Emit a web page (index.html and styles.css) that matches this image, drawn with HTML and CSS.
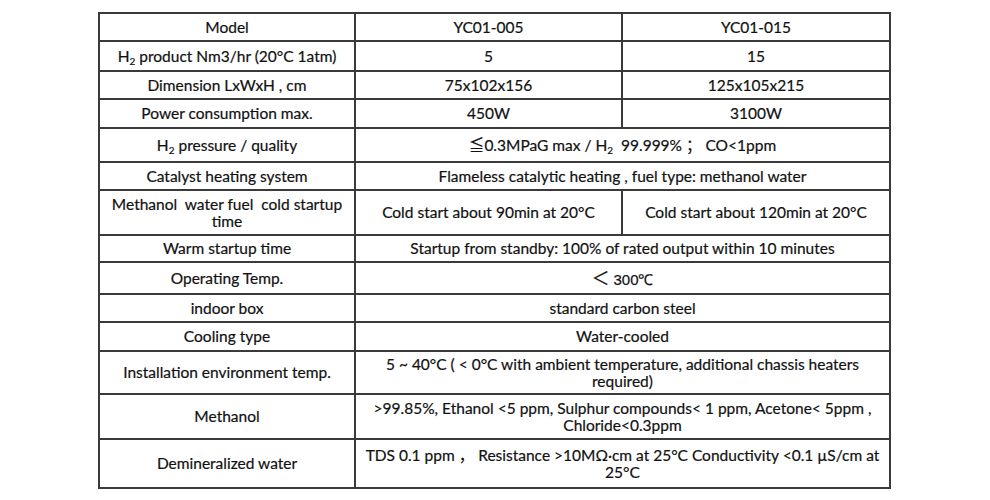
FILE: index.html
```html
<!DOCTYPE html>
<html>
<head>
<meta charset="utf-8">
<link rel="stylesheet" href="styles.css">
</head>
<body>
<table class="spec">
  <colgroup><col class="c1"><col class="c2"><col class="c3"></colgroup>
  <tr class="h28"><td>Model</td><td>YC01-005</td><td>YC01-015</td></tr>
  <tr class="h30"><td>H<sub>2</sub> product Nm3/hr (20°C 1atm)</td><td>5</td><td>15</td></tr>
  <tr class="h28"><td>Dimension LxWxH , cm</td><td>75x102x156</td><td>125x105x215</td></tr>
  <tr class="h29"><td>Power consumption max.</td><td>450W</td><td>3100W</td></tr>
  <tr class="h34"><td>H<sub>2</sub> pressure / quality</td><td colspan="2"><span class="cjk">≦</span>0.3MPaG max / H<sub>2</sub>&nbsp; 99.999% <span class="cjk">；</span> CO&lt;1ppm</td></tr>
  <tr class="h28"><td>Catalyst heating system</td><td colspan="2">Flameless catalytic heating , fuel type: methanol water</td></tr>
  <tr class="h45"><td class="tight">Methanol&nbsp; water fuel&nbsp; cold startup<br>time</td><td>Cold start about 90min at 20°C</td><td>Cold start about 120min at 20°C</td></tr>
  <tr class="h27"><td>Warm startup time</td><td colspan="2">Startup from standby: 100% of rated output within 10 minutes</td></tr>
  <tr class="h32"><td>Operating Temp.</td><td colspan="2"><span class="cjk lt">＜</span> <span class="cjk num">300℃</span></td></tr>
  <tr class="h28"><td>indoor box</td><td colspan="2">standard carbon steel</td></tr>
  <tr class="h29"><td>Cooling type</td><td colspan="2">Water-cooled</td></tr>
  <tr class="h43"><td>Installation environment temp.</td><td colspan="2" class="tight">5 ~ 40°C ( &lt; 0°C with ambient temperature, additional chassis heaters<br>required)</td></tr>
  <tr class="h45"><td>Methanol</td><td colspan="2" class="tight">&gt;99.85%, Ethanol &lt;5 ppm, Sulphur compounds&lt; 1 ppm, Acetone&lt; 5ppm ,<br>Chloride&lt;0.3ppm</td></tr>
  <tr class="h49"><td>Demineralized water</td><td colspan="2" class="tight">TDS 0.1 ppm <span class="cjk">，</span> Resistance &gt;10MΩ·cm at 25°C Conductivity &lt;0.1 µS/cm at<br>25°C</td></tr>
</table>
</body>
</html>
```
FILE: styles.css
```css
html, body {
  margin: 0;
  padding: 0;
  background: #ffffff;
}
body {
  font-family: "Lato", "Liberation Sans", sans-serif;
  font-size: 15.5px;
  color: #111111;
}
.spec {
  border-collapse: collapse;
  margin: 12px 0 0 98px;
  width: 792px;
  table-layout: fixed;
}
.c1 { width: 256px; }
.c2 { width: 267px; }
.c3 { width: 268px; }
.spec td {
  border: 2px solid #3a3a3a;
  text-align: center;
  vertical-align: middle;
  padding: 0 6px;
  line-height: 17px;
  white-space: nowrap;
  -webkit-text-stroke: 0.2px #111;
}
.spec td.tight { padding: 0 2px; }
sub {
  font-size: 10px;
  line-height: 0;
  vertical-align: -3px;
}
.cjk {
  font-family: "Noto Sans CJK SC", sans-serif;
}
.lt { font-size: 18px; }
.num { font-family: "Liberation Sans Narrow", "Liberation Sans", sans-serif; font-size: 15px; }
.h27 { height: 27px; }
.h28 { height: 28px; }
.h29 { height: 29px; }
.h30 { height: 30px; }
.h32 { height: 32px; }
.h34 { height: 34px; }
.h43 { height: 43px; }
.h45 { height: 45px; }
.h49 { height: 49px; }
```
